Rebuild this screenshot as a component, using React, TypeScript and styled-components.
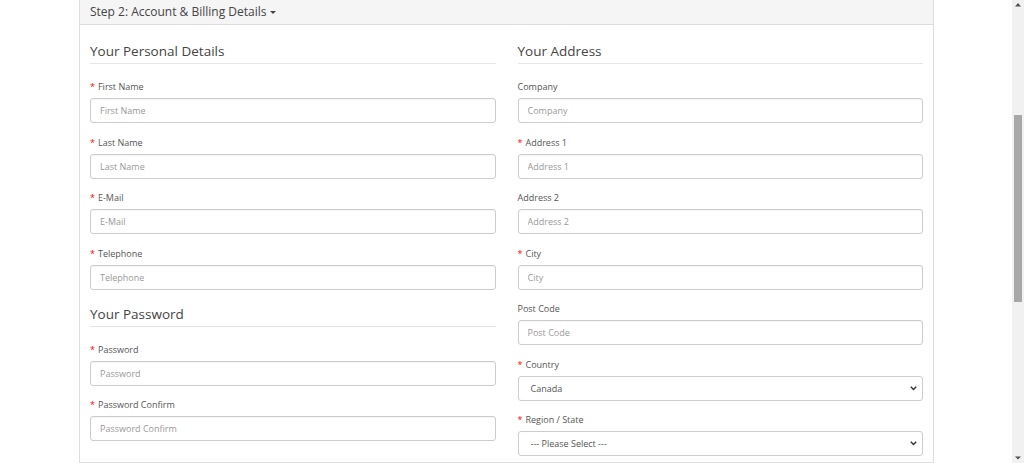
import React from "react";
import styled, { createGlobalStyle } from "styled-components";

const GlobalStyle = createGlobalStyle`
  html, body {
    margin: 0;
    padding: 0;
    background: #fff;
    overflow: hidden;
  }
  body {
    font-family: "Open Sans", "Liberation Sans", sans-serif;
    color: #444;
  }
`;

type Field = { label: string; required?: boolean; select?: string };

const personal: Field[] = [
  { label: "First Name", required: true },
  { label: "Last Name", required: true },
  { label: "E-Mail", required: true },
  { label: "Telephone", required: true },
];

const password: Field[] = [
  { label: "Password", required: true },
  { label: "Password Confirm", required: true },
];

const address: Field[] = [
  { label: "Company" },
  { label: "Address 1", required: true },
  { label: "Address 2" },
  { label: "City", required: true },
  { label: "Post Code" },
  { label: "Country", required: true, select: "Canada" },
  { label: "Region / State", required: true, select: "--- Please Select ---" },
];

function FormField({ label, required, select }: Field) {
  return (
    <StyledGroup>
      <StyledLabel>
        {required && <StyledStar>*</StyledStar>}
        {label}
      </StyledLabel>
      {select ? (
        <StyledSelect>
          <span>{select}</span>
          <svg width="7" height="5" viewBox="0 0 7 5">
            <path d="M0.8 0.8l2.7 2.7 2.7-2.7" fill="none" stroke="#333" strokeWidth="1.5" />
          </svg>
        </StyledSelect>
      ) : (
        <StyledInput placeholder={label} />
      )}
    </StyledGroup>
  );
}

function Scrollbar() {
  return (
    <StyledScrollbar>
      <svg width="12" height="10" viewBox="0 0 12 10">
        <path d="M3 6.5h6L6 3z" fill="#505050" />
      </svg>
      <StyledTrack>
        <StyledThumb />
      </StyledTrack>
      <svg width="12" height="10" viewBox="0 0 12 10">
        <path d="M3 3.5h6L6 6.5z" fill="#505050" />
      </svg>
    </StyledScrollbar>
  );
}

export default function App() {
  return (
    <>
      <GlobalStyle />
      <StyledPage>
        <StyledMain>
          <StyledPanel>
            <StyledHeader>
              Step 2: Account &amp; Billing Details
              <StyledCaret />
            </StyledHeader>
            <StyledBody>
              <StyledColumn>
                <StyledLegend>Your Personal Details</StyledLegend>
                {personal.map((f) => (
                  <FormField key={f.label} {...f} />
                ))}
                <StyledLegend $spaced>Your Password</StyledLegend>
                {password.map((f) => (
                  <FormField key={f.label} {...f} />
                ))}
              </StyledColumn>
              <StyledColumn>
                <StyledLegend>Your Address</StyledLegend>
                {address.map((f) => (
                  <FormField key={f.label} {...f} />
                ))}
              </StyledColumn>
            </StyledBody>
          </StyledPanel>
        </StyledMain>
        <Scrollbar />
      </StyledPage>
    </>
  );
}

const StyledPage = styled.div`
  display: flex;
  height: 463px;
  overflow: hidden;
`;

const StyledMain = styled.div`
  flex: 1;
  padding: 0 78px 0 79px;
`;

const StyledPanel = styled.div`
  border: 1px solid #ddd;
  border-top: none;
  height: 100%;
  box-sizing: border-box;
`;

const StyledHeader = styled.div`
  background: #f5f5f5;
  border-bottom: 1px solid #ddd;
  height: 25px;
  padding: 0 10px 1px;
  box-sizing: border-box;
  font-size: 12px;
  line-height: 22px;
  color: #444;
  display: flex;
  align-items: center;
`;

const StyledCaret = styled.span`
  display: inline-block;
  margin-left: 3px;
  margin-top: 1px;
  border-top: 3px solid #444;
  border-left: 3px solid transparent;
  border-right: 3px solid transparent;
`;

const StyledBody = styled.div`
  display: grid;
  grid-template-columns: 1fr 1fr;
  column-gap: 22px;
  padding: 16px 10px 0;
`;

const StyledColumn = styled.div`
  display: flex;
  flex-direction: column;
`;

const StyledLegend = styled.div<{ $spaced?: boolean }>`
  font-size: 13.5px;
  line-height: 20px;
  color: #444;
  padding-bottom: 2px;
  border-bottom: 1px solid #e5e5e5;
  margin: ${(p) => (p.$spaced ? "1.5px" : "0")} 0 16px;
`;

const StyledGroup = styled.div`
  display: flex;
  flex-direction: column;
  margin-bottom: 12.5px;
`;

const StyledLabel = styled.label`
  font-size: 9px;
  line-height: 13px;
  color: #555;
  margin-bottom: 5px;
`;

const StyledStar = styled.span`
  color: #f00;
  margin-right: 3px;
`;

const StyledInput = styled.input`
  height: 25px;
  box-sizing: border-box;
  border: 1px solid #ccc;
  border-radius: 3px;
  padding: 0 9px;
  font-family: "Open Sans", "Liberation Sans", sans-serif;
  font-size: 9px;
  color: #555;
  outline: none;
  box-shadow: inset 0 1px 1px rgba(0, 0, 0, 0.04);
  &::placeholder {
    color: #999;
  }
`;

const StyledSelect = styled.div`
  height: 25px;
  box-sizing: border-box;
  border: 1px solid #ccc;
  border-radius: 3px;
  padding: 0 5px 0 12px;
  font-size: 9px;
  color: #555;
  display: flex;
  align-items: center;
  justify-content: space-between;
`;

const StyledScrollbar = styled.div`
  width: 12px;
  background: #f1f1f1;
  display: flex;
  flex-direction: column;
  align-items: center;
`;

const StyledTrack = styled.div`
  flex: 1;
  width: 100%;
  display: flex;
  justify-content: center;
  padding-top: 105px;
`;

const StyledThumb = styled.div`
  width: 8px;
  height: 187px;
  background: #a8a8a8;
`;
